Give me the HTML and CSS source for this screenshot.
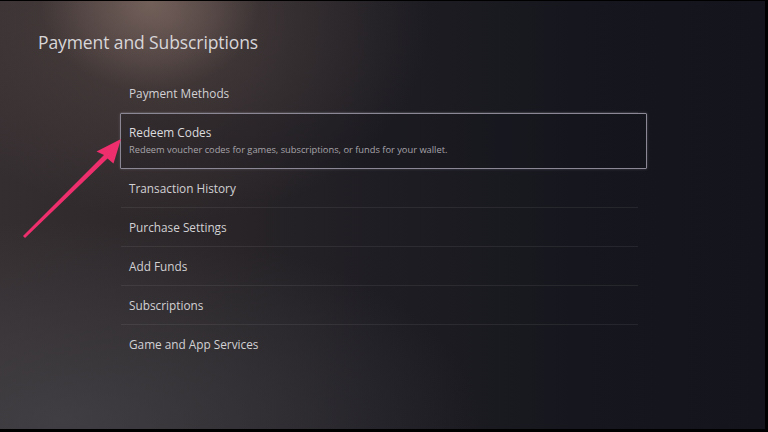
FILE: index.html
```html
<!DOCTYPE html>
<html>
<head>
<meta charset="utf-8">
<link rel="stylesheet" href="styles.css">
</head>
<body>
<div class="screen">
  <h1 class="title">Payment and Subscriptions</h1>
  <ul class="menu">
    <li class="item">Payment Methods</li>
    <li class="item selected">
      <div class="label">Redeem Codes</div>
      <div class="desc">Redeem voucher codes for games, subscriptions, or funds for your wallet.</div>
    </li>
    <li class="item">Transaction History</li>
    <li class="item">Purchase Settings</li>
    <li class="item">Add Funds</li>
    <li class="item">Subscriptions</li>
    <li class="item last">Game and App Services</li>
  </ul>
  <svg class="arrow" width="768" height="432" viewBox="0 0 768 432">
    <polygon points="121,139 113.5,163.5 107.5,158.5 25,238 23,236 104,155 96.5,151.5" fill="#ef2e6d"/>
  </svg>
</div>
</body>
</html>
```
FILE: styles.css
```css
html, body {
  margin: 0;
  padding: 0;
  background: #000;
}
body {
  width: 768px;
  height: 432px;
  overflow: hidden;
}
.screen {
  position: relative;
  width: 765px;
  height: 428px;
  margin-top: 1px;
  overflow: hidden;
  font-family: "Open Sans", "Noto Sans", sans-serif;
  color: #d4d3d6;
  background:
    radial-gradient(ellipse 110px 90px at 150px 0px, rgba(150,125,115,0.55), rgba(150,125,115,0) 100%),
    radial-gradient(ellipse 260px 200px at 170px 20px, rgba(110,90,85,0.45), rgba(110,90,85,0) 100%),
    radial-gradient(ellipse 420px 200px at 60px 420px, rgba(70,70,76,0.7), rgba(70,70,76,0) 100%),
    linear-gradient(90deg, #352e30 0%, #2b2629 25%, #1e1d23 50%, #16171e 75%, #14151c 100%);
}
.title {
  margin: 0;
  padding: 29px 0 0 38px;
  font-size: 17.5px;
  line-height: 24px;
  font-weight: 400;
  color: #d8d6d8;
  letter-spacing: -0.1px;
}
.menu {
  list-style: none;
  margin: 20px 0 0 121px;
  padding: 0;
  width: 517px;
}
.item {
  height: 38px;
  line-height: 38px;
  padding-left: 8px;
  font-size: 11.8px;
  color: #d2d1d4;
  border-bottom: 1px solid rgba(255,255,255,0.07);
}
.item.last {
  border-bottom: none;
}
.item.selected {
  height: 54px;
  line-height: normal;
  margin: 0 -9px 0 -1px;
  padding: 0 0 0 8px;
  border: 1px solid #8b8794;
  border-radius: 1px;
  box-shadow: 0 0 3px rgba(150,145,165,0.35);
  background: rgba(20,18,26,0.25);
}
.label {
  padding-top: 10px;
  font-size: 11.8px;
  line-height: 16px;
  color: #dcdbde;
}
.desc {
  padding-top: 3px;
  font-size: 9.3px;
  line-height: 13px;
  color: #a7a4aa;
}
.arrow {
  position: absolute;
  left: 0;
  top: -1px;
  pointer-events: none;
}
```
